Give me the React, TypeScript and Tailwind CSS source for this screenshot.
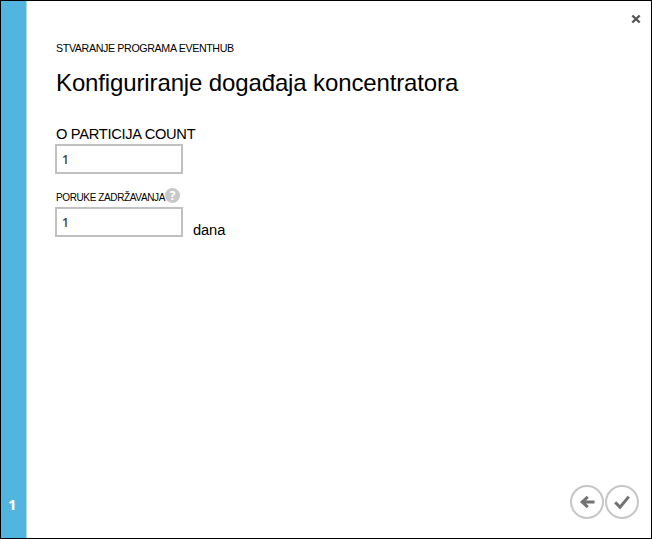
import React from "react";

function Field({ value, label }: { value: string; label: string }) {
  return (
    <input
      aria-label={label}
      defaultValue={value}
      className="block h-[30px] w-[128px] border-2 border-[#c0c0c0] bg-white pl-[5px] font-['Open_Sans',sans-serif] text-[12px] font-semibold text-[#444] outline-none"
    />
  );
}

export default function App() {
  return (
    <div className="flex h-[539px] w-[652px] border border-black bg-white font-['Liberation_Sans',Arial,sans-serif] text-black">
      <aside className="flex w-[26px] shrink-0 items-end border-r border-[#a5d9ef] bg-[#52b5e0] pb-[23px] pl-[7px] font-['Open_Sans',sans-serif] text-[15px] leading-[22px] font-bold text-white">
        1
      </aside>
      <main className="flex flex-1 flex-col pl-[28px]">
        <div className="flex h-[40px] justify-end pt-[13px] pr-[10px]">
          <button aria-label="Zatvori" className="size-[10px]">
            <svg viewBox="0 0 10 10" className="size-[10px]" fill="none" stroke="#555" strokeWidth="2.4">
              <path d="M1.3 1.5 8.7 8.5M8.7 1.5 1.3 8.5" />
            </svg>
          </button>
        </div>
        <p className="h-[14px] pl-px text-[10.67px] leading-[14px] tracking-[-0.36px] whitespace-nowrap">STVARANJE PROGRAMA EVENTHUB</p>
        <h1 className="mt-[12px] h-[32px] pl-px text-[24px] leading-[32px] tracking-[-0.13px] whitespace-nowrap">Konfiguriranje događaja koncentratora</h1>
        <p className="mt-[25px] h-[20px] pl-px text-[14.67px] leading-[20px] tracking-[-0.3px] whitespace-nowrap">O PARTICIJA COUNT</p>
        <Field value="1" label="O PARTICIJA COUNT" />
        <div className="mt-[13px] flex h-[20px] pl-px">
          <span className="w-[109px] pt-[4px] text-[10px] leading-[14px] tracking-[-0.38px] whitespace-nowrap">PORUKE ZADRŽAVANJA</span>
          <span className="mt-px flex size-[15px] items-center justify-center rounded-full bg-[#c8c8c8] font-['Open_Sans',sans-serif] text-[12px] leading-[15px] font-bold text-white">?</span>
        </div>
        <div className="flex">
          <Field value="1" label="PORUKE ZADRŽAVANJA" />
          <span className="pt-[13px] pl-[10px] text-[14.67px] leading-[20px] tracking-[-0.1px]">dana</span>
        </div>
        <div className="mt-auto flex justify-end gap-px pr-[12px] pb-[19px]">
          <button aria-label="Natrag" className="flex size-[34px] items-center justify-center rounded-full border-2 border-[#c6c6c6]">
            <svg viewBox="0 0 30 30" className="size-[30px]" fill="none" stroke="#737373" strokeWidth="3">
              <path d="M22.5 15H10.5M15.8 9.8 10.2 15 15.8 20.2" />
            </svg>
          </button>
          <button aria-label="Potvrdi" className="flex size-[34px] items-center justify-center rounded-full border-2 border-[#c6c6c6]">
            <svg viewBox="0 0 30 30" className="size-[30px]" fill="none" stroke="#737373" strokeWidth="3">
              <path d="M8.2 15.2 13 20.2 21.8 9.6" />
            </svg>
          </button>
        </div>
      </main>
    </div>
  );
}
